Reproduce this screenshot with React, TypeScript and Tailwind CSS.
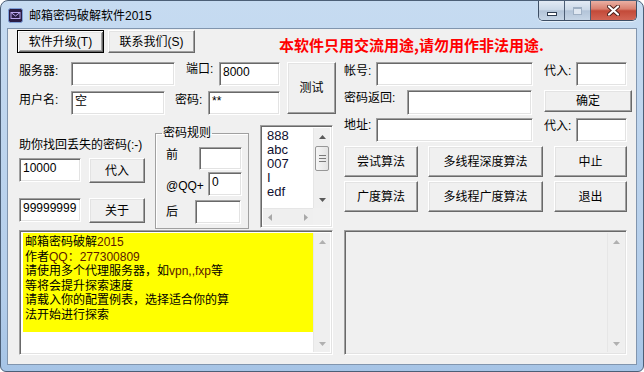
import React from "react";

const FONT = "font-['Liberation_Sans','Noto_Sans_CJK_SC',sans-serif]";

const sunken =
  "border border-t-[#a0a0a0] border-l-[#a0a0a0] border-b-white border-r-white shadow-[inset_1px_1px_0_#696969,inset_-1px_-1px_0_#e3e3e3]";

function TextBox({ className, children }: { className?: string; children?: React.ReactNode }) {
  return (
    <div className={`${sunken} bg-white shrink-0 overflow-hidden whitespace-nowrap px-[3px] pt-[2px] text-[12px] leading-[14px] text-black ${className ?? ""}`}>
      {children}
    </div>
  );
}

function Btn({ className, children, def }: { className?: string; children: React.ReactNode; def?: boolean }) {
  const edge = def
    ? "border border-black shadow-[inset_1px_1px_0_#fff,inset_-1px_-1px_0_#696969,inset_2px_2px_0_#e3e3e3,inset_-2px_-2px_0_#a0a0a0]"
    : "border border-t-white border-l-white border-b-[#696969] border-r-[#696969] shadow-[inset_-1px_-1px_0_#a0a0a0,inset_1px_1px_0_#e3e3e3]";
  return (
    <div className={`${edge} bg-[#f0f0f0] shrink-0 flex items-center justify-center text-[12px] leading-[14px] text-black ${className ?? ""}`}>
      {children}
    </div>
  );
}

function Label({ className, children }: { className?: string; children: React.ReactNode }) {
  return <span className={`shrink-0 leading-[14px] whitespace-nowrap ${className ?? ""}`}>{children}</span>;
}

function Tri({ dir, className }: { dir: "up" | "down" | "left" | "right"; className?: string }) {
  const pts = {
    up: "0,4 7,4 3.5,0",
    down: "0,0 7,0 3.5,4",
    left: "4,0 4,7 0,3.5",
    right: "0,0 0,7 4,3.5",
  }[dir];
  const horiz = dir === "up" || dir === "down";
  return (
    <svg width={horiz ? 7 : 4} height={horiz ? 4 : 7} className={className}>
      <polygon points={pts} fill="currentColor" />
    </svg>
  );
}

function Thumb({ className }: { className?: string }) {
  return (
    <div className={`rounded-[2px] border border-[#979797] bg-[linear-gradient(90deg,#f6f6f6,#e3e3e3)] flex flex-col items-center justify-center gap-[2px] ${className ?? ""}`}>
      <div className="w-[7px] h-px bg-[#7a7a7a]" />
      <div className="w-[7px] h-px bg-[#7a7a7a]" />
      <div className="w-[7px] h-px bg-[#7a7a7a]" />
    </div>
  );
}

function VScroll({ thumb, arrow }: { thumb?: boolean; arrow: string }) {
  return (
    <div className={`w-[17px] shrink-0 flex flex-col bg-[#efefef] border-l border-[#e6e6e6] ${arrow}`}>
      <div className="h-[17px] flex items-center justify-center">
        <Tri dir="up" />
      </div>
      <div className="flex-1 px-[1px]">{thumb && <Thumb className="mt-[1px] h-[25px]" />}</div>
      <div className="h-[17px] flex items-center justify-center">
        <Tri dir="down" />
      </div>
    </div>
  );
}

function AppIcon() {
  return (
    <svg width="15" height="15" className="ml-[7px] mt-[7px] shrink-0">
      <rect x="0.5" y="0.5" width="14" height="14" rx="2" fill="#2a1d45" stroke="#7e9fd8" />
      <rect x="3" y="4.5" width="9" height="6" fill="none" stroke="#b9a6ee" strokeWidth="1" />
      <path d="M3 4.5 L7.5 8 L12 4.5" fill="none" stroke="#b9a6ee" strokeWidth="1" />
    </svg>
  );
}

function CaptionButtons() {
  return (
    <div className="ml-auto mr-[6px] flex h-[20px] border border-t-0 border-[#3d4e65] rounded-b-[5px] overflow-hidden shadow-[0_1px_1px_rgba(255,255,255,0.6)]">
      <div className="w-[26px] flex items-end justify-center pb-[4px] border-r border-[#4c5d74] bg-[linear-gradient(180deg,#e2eaf4_0%,#ccd9e8_45%,#b3c4d8_52%,#c6d5e6_100%)]">
        <div className="w-[10px] h-[4px] bg-white border border-[#2e3c50]" />
      </div>
      <div className="w-[26px] flex items-center justify-center border-r border-[#4c5d74] bg-[linear-gradient(180deg,#e2eaf4_0%,#ccd9e8_45%,#b3c4d8_52%,#c6d5e6_100%)]">
        <div className="w-[9px] h-[8px] border border-t-2 border-[#9fb0c4] bg-[#dfe7f1]" />
      </div>
      <div className="w-[45px] flex items-center justify-center bg-[linear-gradient(180deg,#eab0a3_0%,#d9806f_42%,#c34a39_52%,#d26555_100%)]">
        <svg width="13" height="11">
          <path d="M2 1.5 L11 9.5 M11 1.5 L2 9.5" stroke="#4a1f1a" strokeWidth="4" strokeLinecap="round" />
          <path d="M2 1.5 L11 9.5 M11 1.5 L2 9.5" stroke="#ffffff" strokeWidth="2.2" strokeLinecap="round" />
        </svg>
      </div>
    </div>
  );
}

function Latin({ children }: { children: React.ReactNode }) {
  return <span className="text-[#5c1800]">{children}</span>;
}

export default function App() {
  return (
    <div className={`w-[644px] h-[372px] bg-white ${FONT} text-[12px] text-black`}>
      <div className="w-[644px] h-[372px] flex flex-col rounded-t-[8px] rounded-b-[6px] border border-[#4c5f77] overflow-hidden bg-[linear-gradient(180deg,#c6dbf1_0%,#bed5ee_35%,#b3cdea_80%,#a6c4e6_100%)]">
        {/* title bar */}
        <div className="h-[27px] flex items-start shrink-0">
          <AppIcon />
          <span className="ml-[6px] mt-[8px] leading-[14px] text-[12px] whitespace-nowrap">邮箱密码破解软件2015</span>
          <CaptionButtons />
        </div>

        {/* client area */}
        <div className="mx-[6px] h-[337px] shrink-0 border border-[#8195ae] bg-[#f0f0f0] flex flex-col">
          {/* top buttons + notice */}
          <div className="flex items-start h-[23px] mt-[1px] pl-[9px]">
            <Btn def className="w-[87px] h-[23px]">软件升级(T)</Btn>
            <Btn className="ml-[4px] w-[87px] h-[23px]">联系我们(S)</Btn>
            <span className="ml-[84px] mt-[6px] text-[15px] leading-[17px] font-bold text-[#ff0000] whitespace-nowrap font-['Noto_Sans_CJK_SC',sans-serif]">
              本软件只用交流用途,请勿用作非法用途.
            </span>
          </div>

          <div className="flex mt-[9px] pl-[11px]">
            {/* left column */}
            <div className="w-[318px] flex flex-col">
              <div className="flex">
                <div className="w-[261px] flex flex-col">
                  <div className="flex h-[24px]">
                    <Label className="w-[52px] pt-[2px]">服务器:</Label>
                    <TextBox className="w-[104px] h-[24px]" />
                    <Label className="w-[44px] pl-[11px]">端口:</Label>
                    <TextBox className="w-[61px] h-[24px]">8000</TextBox>
                  </div>
                  <div className="flex h-[24px] mt-[5px]">
                    <Label className="w-[52px] pt-[2px]">用户名:</Label>
                    <TextBox className="w-[94px] h-[24px]">空</TextBox>
                    <Label className="w-[43px] pl-[10px] pt-[2px]">密码:</Label>
                    <TextBox className="w-[72px] h-[24px]">**</TextBox>
                  </div>
                </div>
                <Btn className="ml-[7px] w-[49px] h-[52px]">测试</Btn>
              </div>

              <div className="flex items-start mt-[10px]">
                <div className="w-[126px] flex flex-col">
                  <Label className="mt-[13px]">助你找回丢失的密码(:-)</Label>
                  <div className="flex mt-[6px]">
                    <TextBox className="w-[62px] h-[24px]">10000</TextBox>
                    <Btn className="ml-[8px] w-[56px] h-[25px]">代入</Btn>
                  </div>
                  <div className="flex mt-[15px]">
                    <TextBox className="w-[62px] h-[24px]">99999999</TextBox>
                    <Btn className="ml-[8px] w-[56px] h-[25px]">关于</Btn>
                  </div>
                </div>

                <fieldset className="ml-[10px] mt-[1px] w-[94px] h-[103px] border border-[#a0a0a0] shadow-[inset_1px_1px_0_#fff] flex flex-col">
                  <legend className="ml-[6px] px-[1px] leading-[14px]">密码规则</legend>
                  <div className="flex items-start justify-between mt-[7px] h-[23px]">
                    <Label className="pl-[10px] pt-[1px]">前</Label>
                    <TextBox className="w-[43px] h-[23px] mr-[6px]" />
                  </div>
                  <div className="flex items-center justify-between mt-[2px] h-[24px]">
                    <Label className="pl-[10px] pt-[3px]">@QQ+</Label>
                    <TextBox className="w-[34px] h-[24px] mr-[6px]">0</TextBox>
                  </div>
                  <div className="flex items-center justify-between mt-[4px] h-[24px]">
                    <Label className="pl-[10px]">后</Label>
                    <TextBox className="w-[46px] h-[24px] mr-[7px]" />
                  </div>
                </fieldset>

                <div className={`${sunken} ml-[11px] w-[73px] h-[103px] bg-white flex flex-col p-[2px]`}>
                  <div className="flex flex-1 min-h-0">
                    <div className="flex-1 pl-[4px] pt-[1px] text-[13px] leading-[14px] text-[#101030]">
                      <div>888</div>
                      <div>abc</div>
                      <div>007</div>
                      <div>I</div>
                      <div>edf</div>
                    </div>
                    <VScroll thumb arrow="text-[#5a5a5a]" />
                  </div>
                  <div className="h-[17px] flex">
                    <div className="flex-1 flex items-center justify-between px-[5px] bg-[#efefef] border-t border-[#e6e6e6] text-[#a8a8a8]">
                      <Tri dir="left" />
                      <Tri dir="right" />
                    </div>
                    <div className="w-[17px] bg-[#f0f0f0]" />
                  </div>
                </div>
              </div>

              <div className={`${sunken} mt-[1px] w-[314px] h-[125px] bg-white flex p-[2px]`}>
                <div className="flex-1 pl-[1px]">
                  <div className="h-[99px] bg-[#ffff00] pl-[2px] pt-[2px] text-[12px] leading-[14.5px] whitespace-nowrap">
                    <div>
                      邮箱密码破解<Latin>2015</Latin>
                    </div>
                    <div>
                      作者<Latin>QQ：277300809</Latin>
                    </div>
                    <div>
                      请使用多个代理服务器，如<Latin>vpn,,fxp</Latin>等
                    </div>
                    <div>等将会提升探索速度</div>
                    <div>请载入你的配置例表，选择适合你的算</div>
                    <div>法开始进行探索</div>
                  </div>
                </div>
                <VScroll arrow="text-[#b0b0b0]" />
              </div>
            </div>

            {/* right column */}
            <div className="ml-[7px] w-[288px] flex flex-col">
              <div className="flex h-[24px]">
                <Label className="w-[32px] pt-[2px]">帐号:</Label>
                <TextBox className="w-[157px] h-[24px]" />
                <Label className="w-[43px] pl-[11px] pt-[2px]">代入:</Label>
                <TextBox className="w-[51px] h-[24px]" />
              </div>
              <div className="flex mt-[4px] h-[25px]">
                <Label className="w-[63px] pt-[1px]">密码返回:</Label>
                <TextBox className="w-[125px] h-[25px]" />
                <Btn className="ml-[12px] w-[88px] h-[22px]">确定</Btn>
              </div>
              <div className="flex mt-[3px] h-[24px]">
                <Label className="w-[32px]">地址:</Label>
                <TextBox className="w-[157px] h-[24px]" />
                <Label className="w-[43px] pl-[11px] pt-[1px]">代入:</Label>
                <TextBox className="w-[51px] h-[24px]" />
              </div>
              <div className="flex mt-[4px]">
                <Btn className="w-[74px] h-[31px]">尝试算法</Btn>
                <Btn className="ml-[10px] w-[115px] h-[31px]">多线程深度算法</Btn>
                <Btn className="ml-[11px] w-[73px] h-[31px]">中止</Btn>
              </div>
              <div className="flex mt-[4px]">
                <Btn className="w-[74px] h-[31px]">广度算法</Btn>
                <Btn className="ml-[10px] w-[115px] h-[31px]">多线程广度算法</Btn>
                <Btn className="ml-[11px] w-[73px] h-[31px]">退出</Btn>
              </div>
              <div className={`${sunken} mt-[18px] w-[283px] h-[125px] bg-[#f0f0f0] flex p-[2px]`}>
                <div className="flex-1" />
                <VScroll arrow="text-[#b0b0b0]" />
              </div>
            </div>
          </div>
        </div>
      </div>
    </div>
  );
}
